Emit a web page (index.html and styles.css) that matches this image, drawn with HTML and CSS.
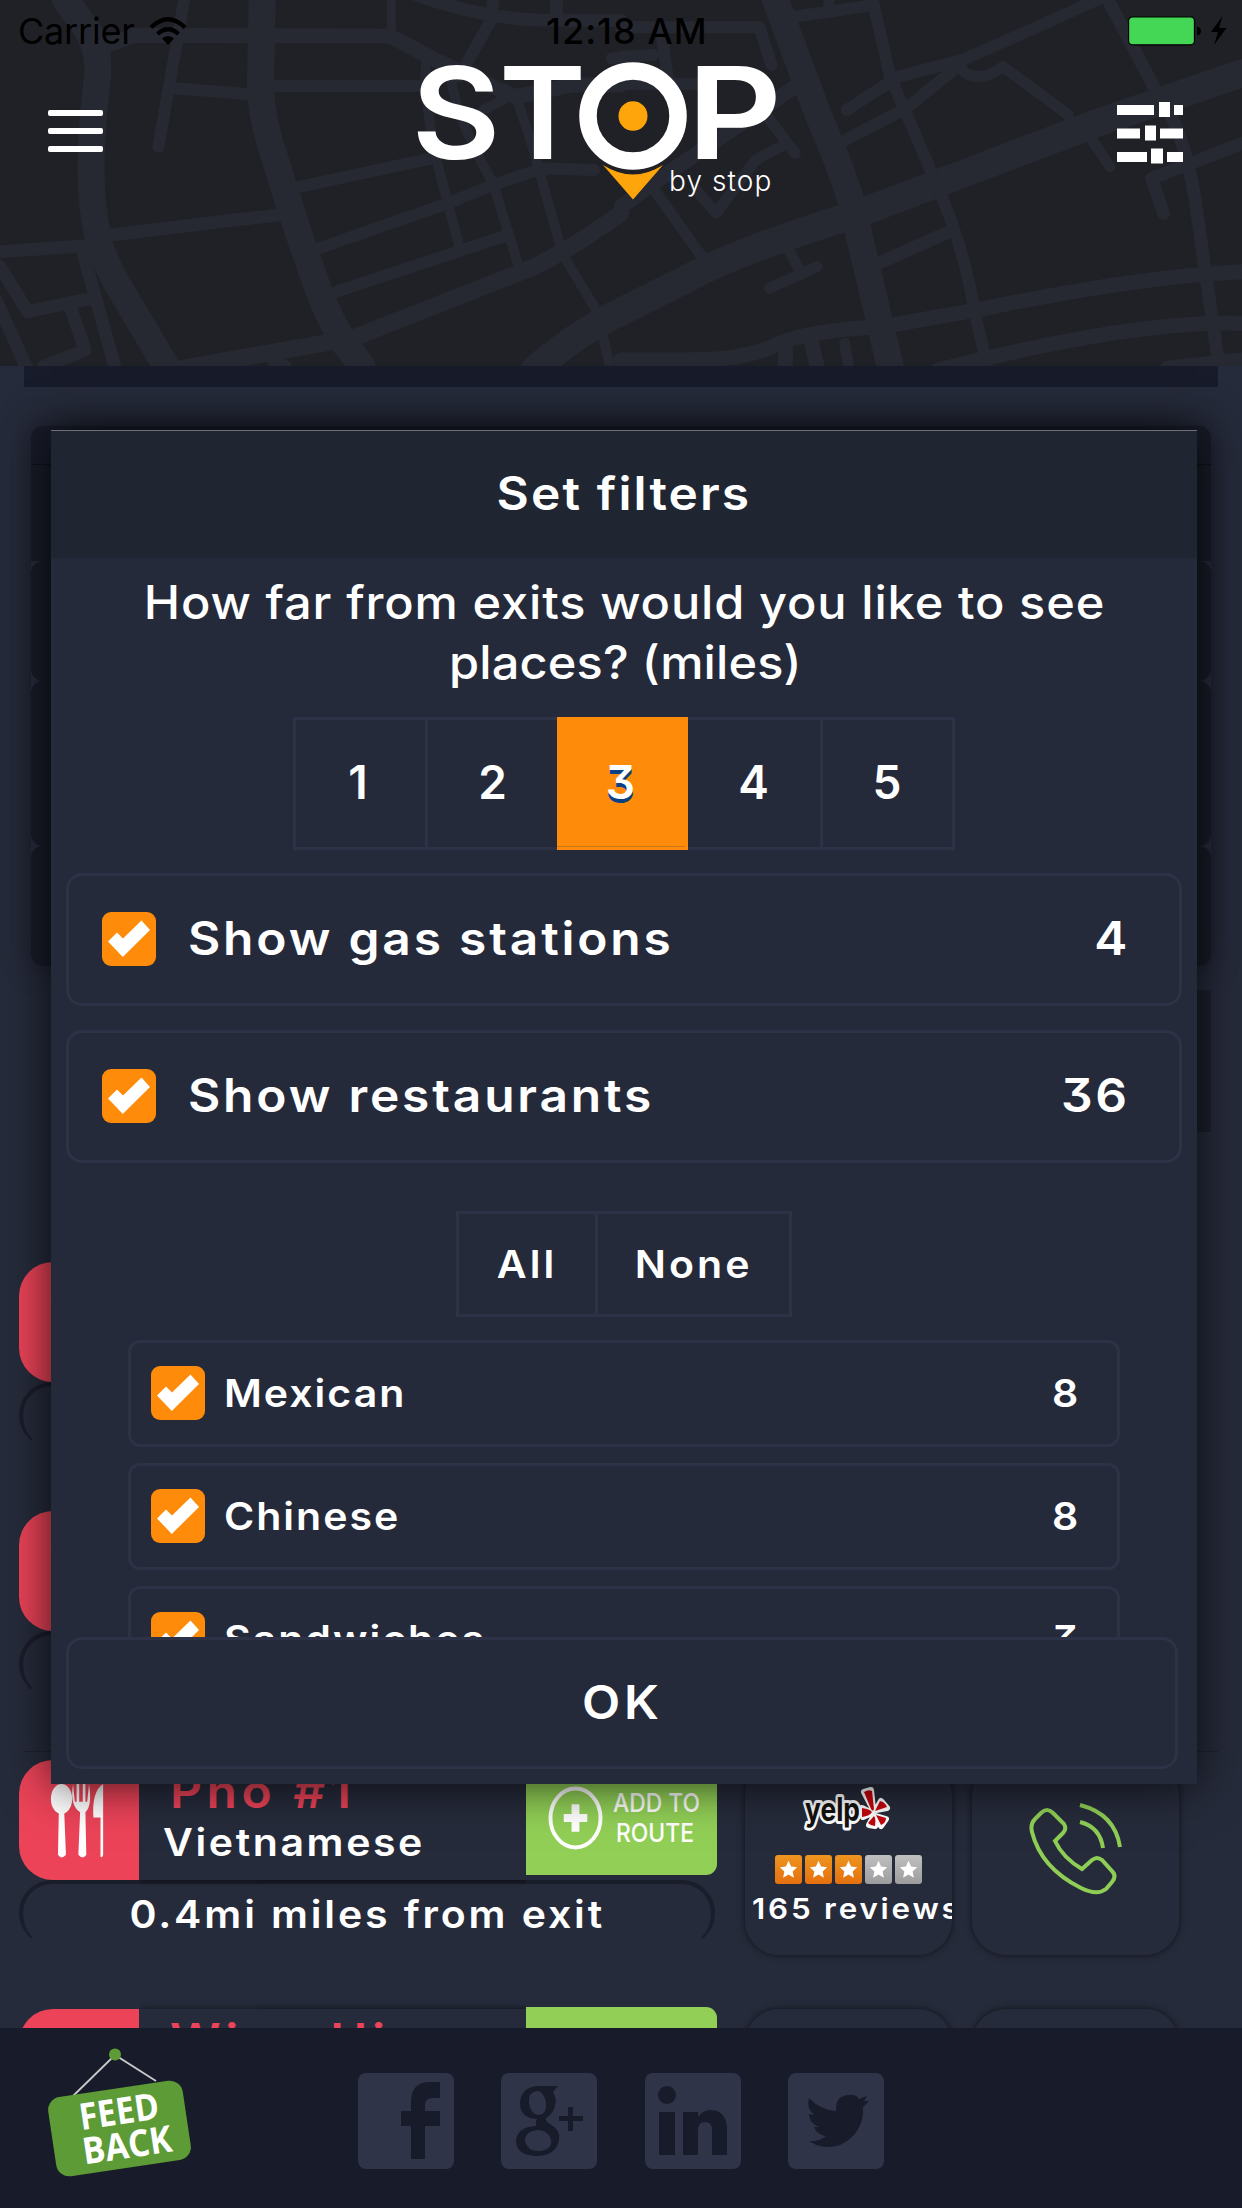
FILE: index.html
```html
<!DOCTYPE html>
<html lang="en">
<head>
<meta charset="utf-8">
<title>Stop by stop</title>
<link rel="stylesheet" href="styles.css">
</head>
<body>
<svg class="defs" aria-hidden="true">
  <symbol id="check" viewBox="0 0 54 54"><path d="M6 29.500 L15 20.500 L21 26.500 L39.500 8.500 L48 18 L20.800 45 Z" fill="#fff"/></symbol>
  <symbol id="utensils" viewBox="0 0 70 90">
    <ellipse cx="13" cy="19" rx="12" ry="17"/><path d="M10 32h6l2 50q-5 6-9 0z"/>
    <path d="M26 2l2 20h2V2h3v20h4V2h3v20h2l2-20q4 24-4 32l1 48q-4 6-9 0l2-48q-12-8-8-32z"/>
    <path d="M57 84V40h-8Q47 10 60 2V82q-1 4-3 2z"/>
  </symbol>
  <symbol id="star" viewBox="0 0 28 28"><path d="M14 5l2.700 6 6.300.700-4.700 4.300 1.300 6.500-5.600-3.300-5.600 3.300 1.300-6.500L5 11.700l6.300-.700z" fill="#fff"/></symbol>
</svg>
<div class="app">
  <header class="top">
    <svg class="map" viewBox="0 0 1242 366" preserveAspectRatio="none">
      <g transform="scale(.396 .3333)">
        <path class="w26" d="M165,0 L215,80 Q250,140 247,220 Q235,350 232,420 C225,560 235,640 250,730 Q270,800 300,860 L420,1100"/>
        <path class="w26" d="M662,0 L658,240 Q655,330 690,460 Q740,650 760,720 C800,860 830,960 870,1030 L915,1100"/>
        <path class="w15" d="M240,150 L340,106 L985,108 L1100,180 L1300,290 L1450,255 H1568"/>
        <path class="w12" d="M465,0 L440,170 L400,440 M440,265 L625,282 M690,258 H1060 M1245,0 L1240,60 L1160,230"/>
        <path class="w9" d="M988,0 V100"/>
        <path class="w14" d="M1040,-20 Q1200,50 1350,60 L1568,62 M1405,0 V60"/>
        <path class="w12" d="M750,562 L1090,475 M805,745 L1130,610 L1245,555 L1370,505 L1500,510 M850,875 L1270,710"/>
        <path class="w10" d="M1078,180 Q1065,250 1100,470 L1160,740 M1140,240 Q1150,350 1245,550 L1310,800 M1220,330 L1300,280 L1340,420 L1420,760 L1510,940 L1540,1100"/>
        <path class="w18" d="M900,1010 L1350,800 Q1450,740 1568,640 M460,1105 L840,1025"/>
        <path class="w14" d="M280,705 L700,645 M0,755 L210,738 M205,740 L290,1100 M0,800 L70,935 L230,895 M-10,900 L70,1110 M180,930 L215,1050 L110,1100 M690,1080 L720,1100"/>
        <path class="w12" d="M1545,175 H1568"/>
      </g>
      <g transform="translate(621 0) scale(.396 .3333)">
        <path class="w28" d="M-220,1110 Q-100,990 0,935 L160,840 Q300,750 600,640 L1200,370 L1568,220"/>
        <path class="w26" d="M390,0 L500,350 Q590,600 600,700 L680,1100"/>
        <path class="w12" d="M440,50 L640,15 M635,0 L680,230 L800,560 Q870,760 890,920 L925,1100 M570,330 L700,230 L860,180 Q1000,110 1220,-10 M550,430 L720,325 L850,200"/>
        <path class="w11" d="M860,200 Q870,240 930,225 L965,200 L1130,345 M1190,420 L1235,500 M350,320 L440,460 M190,570 L240,640 L340,480 L420,430 M90,580 L210,780 M420,740 L450,810 M375,865 L495,800"/>
        <path class="w14" d="M1230,0 L1350,270 Q1420,380 1450,600 L1510,1100 M1568,430 L1440,490 L1340,535 L1370,640 M650,790 L820,700"/>
        <path class="w12" d="M0,82 H350 L380,195 M100,80 L120,250 M0,252 H200 M0,170 L80,165"/>
        <path class="w15" d="M0,620 L130,510 L440,260 M0,1080 C200,1080 300,1090 400,1030 Q480,990 660,980 L900,930 Q1300,830 1568,815 M800,1110 Q1300,960 1568,970 M1380,1105 L1568,1080 M415,1040 V1100 M480,1020 L495,1100"/>
        <path class="w11" d="M565,1030 L575,1100 M525,0 V20"/>
      </g>
    </svg>
    <div class="status">
      <span class="carrier">Carrier</span>
      <svg class="wifi" viewBox="0 0 38 28"><path d="M2 10.500Q19-6 36 10.500" class="arc"/><path d="M8.500 17Q19 7.500 29.500 17" class="arc"/><path d="M13 21.500Q19 16.500 25 21.500L19 28z"/></svg>
      <span class="time">12:18 AM</span>
      <svg class="battery" viewBox="0 0 100 30"><rect x=".5" y=".8" width="66" height="28" rx="4" fill="#44d755" stroke="#000" stroke-width="1.300"/><path d="M69 10.500q4 1 4 4.500t-4 4.500z"/><path d="M94.500 0L83 16h7l-4 13L98.500 12h-7.500z"/></svg>
    </div>
    <div class="nav">
      <div class="burger"><i></i><i></i><i></i></div>
      <svg class="logo" viewBox="410 55 374 150">
        <g class="word">
          <text x="411.500" y="159" textLength="89" lengthAdjust="spacingAndGlyphs">S</text>
          <text x="499" y="159" textLength="87" lengthAdjust="spacingAndGlyphs">T</text>
          <text x="687" y="159" textLength="95" lengthAdjust="spacingAndGlyphs">P</text>
        </g>
        <circle cx="633" cy="116" r="45" fill="none" stroke="#fff" stroke-width="17.500"/>
        <ellipse cx="633" cy="116" rx="14.500" ry="14.800" fill="#ffa50c"/>
        <path d="M603 165Q633 184 663 165L633 199.500Z" fill="#ffa50c"/>
        <text class="tag" x="669" y="190.500">by stop</text>
      </svg>
      <svg class="sliders" viewBox="0 0 66 60"><path d="M0 3h37v10H0zM42 0h11v15H42zM57 3h9v10h-9zM0 26.500h23v10H0zM28 23.500h11v15H28zM43 26.500h23v10H43zM0 50h30v10H0zM34 46.500h12v15H34zM50 50h16v10H50z"/></svg>
    </div>
  </header>

  <main class="feed">
    <div class="strip"></div>
    <div class="panels"><div class="p1"></div><div class="p2"></div><div class="p3"></div><div class="p4"></div></div>
    <div class="side"></div>
    <div class="list">
      <section class="row">
        <div class="place"><div class="head"><div class="tile"><svg class="utensils"><use href="#utensils"/></svg></div></div><div class="clip"><div class="dist"></div></div></div>
      </section>
      <section class="row line">
        <div class="place"><div class="head"><div class="tile"><svg class="utensils"><use href="#utensils"/></svg></div></div><div class="clip"><div class="dist"></div></div></div>
      </section>
      <section class="row">
        <div class="place">
          <div class="head">
            <div class="tile"><svg class="utensils"><use href="#utensils"/></svg></div>
            <div class="info"><h3>Pho #1</h3><p>Vietnamese</p></div>
            <div class="add">
              <svg class="plus" viewBox="0 0 56 64"><ellipse cx="28" cy="32" rx="25.500" ry="30" fill="none" stroke="#fff" stroke-width="4"/><path d="M28 18v28M16 32h24" stroke="#fff" stroke-width="8"/></svg>
              <div class="lbl"><span class="a">ADD TO</span><span class="b">ROUTE</span></div>
            </div>
          </div>
          <div class="clip"><div class="dist"><span class="wide">0.4mi miles from exit</span></div></div>
        </div>
        <div class="card yelp">
          <svg class="ylogo" viewBox="0 0 88 46">
            <g class="halo"><text x="2" y="32" textLength="55" lengthAdjust="spacingAndGlyphs" aria-hidden="true">yelp</text><path d="M61 3l7-2 2 19zM59 19l10 5-9 4zM66 36l5-9 1 10zM73 27l10 3-5 7zM73 21l5-9 6 7z"/></g>
            <path d="M61 3q5-3 8-1l2 18q-1 3-3 0zM59 19q8 1 10 4-2 4-10 5zM65 34l6-7q2 2 1 10-4 0-7-3zM73 26l10 3q0 5-5 7zM72 22l5-10q5 1 7 6z" fill="#c4050c"/>
          </svg>
          <div class="stars"><svg><use href="#star"/></svg><svg><use href="#star"/></svg><svg><use href="#star"/></svg><svg class="off"><use href="#star"/></svg><svg class="off"><use href="#star"/></svg></div>
          <div class="reviews"><span class="wide">165 reviews</span></div>
        </div>
        <div class="card call">
          <svg viewBox="0 0 94 94"><path d="M12 11Q18 5 24 11L35 22Q38 27 34 31L26 39Q34 56 53 67L63 58Q68 54 73 58L83 69Q88 74 83 80L77 87Q68 94 52 86Q12 66 3 30Q1 22 6 17ZM51 3Q86 12 91 45M51 20Q71 25 74 46"/></svg>
        </div>
      </section>
      <section class="row">
        <div class="place">
          <div class="head">
            <div class="tile"></div>
            <div class="info"><h3>Wing Hing</h3></div>
            <div class="add"></div>
          </div>
        </div>
        <div class="card"></div>
        <div class="card"></div>
      </section>
    </div>
  </main>

  <footer class="foot">
    <svg class="sign" viewBox="0 0 150 140">
      <path d="M26 57L69 15L110 41" fill="none" stroke="#c8c8c8" stroke-width="1.800"/>
      <circle cx="69" cy="14.500" r="6" fill="#5d9b36"/>
      <g transform="translate(73.500 88.500) rotate(-8.500)">
        <rect x="-68" y="-40" width="136" height="80" rx="13" fill="#5d9b36"/>
        <text x="-38" y="-4" textLength="80" lengthAdjust="spacingAndGlyphs">FEED</text>
        <text x="-40" y="30.500" textLength="90" lengthAdjust="spacingAndGlyphs">BACK</text>
      </g>
    </svg>
    <nav class="social">
      <svg viewBox="0 0 96 96"><path d="M53 86V53H43V38H53V29Q53 9 72 9H82V25H75Q67 25 67 32V38H82V53H67V86Z"/></svg>
      <svg viewBox="0 0 96 96">
        <path fill-rule="evenodd" d="M57 13L52 19Q56 25 54 33Q52 41 45 45Q44 48 49 51Q60 57 58 67Q55 83 35 83Q15 82 15 68Q16 54 35 53Q34 49 36 46Q19 45 19 30Q20 13 39 13ZM36 18Q27 19 28 30Q30 42 38 42Q46 41 45 30Q43 18 36 18ZM37 57Q24 58 24 68Q26 78 38 78Q51 77 50 68Q49 58 37 57Z"/>
        <path d="M67 34H72V43H82V48H72V58H67V48H58V43H67Z"/>
      </svg>
      <svg viewBox="0 0 96 96"><circle cx="22" cy="22" r="9"/><path d="M14 39H30V82H14ZM38 39H53V44Q58 37 66 37Q82 38 82 56V82H67V57Q67 49 60 49Q53 49 53 58V82H38Z"/></svg>
      <svg viewBox="0 0 96 96"><path d="M21 25Q32 37 48 38Q47 23 60 22Q68 21 71 26L79 23L76 28L81 28L75 34Q76 52 64 64Q53 75 37 74Q28 73 21 68Q31 69 38 63Q29 62 26 54H31Q21 50 21 41L26 42Q18 35 21 25Z"/></svg>
    </nav>
  </footer>

  <div class="modal">
    <h2><span class="wide">Set filters</span></h2>
    <p class="ask"><span class="q1">How far from exits would you like to see</span><br><span class="q2">places? (miles)</span></p>
    <div class="seg miles"><b>1</b><b>2</b><b class="on">3</b><b>4</b><b>5</b></div>
    <label class="opt"><i class="box"><svg><use href="#check"/></svg></i><span class="wide">Show gas stations</span><em class="wide">4</em></label>
    <label class="opt"><i class="box"><svg><use href="#check"/></svg></i><span class="wide">Show restaurants</span><em class="wide">36</em></label>
    <div class="scroll">
      <div class="seg pick"><b><span class="wide">All</span></b><b><span class="wide">None</span></b></div>
      <label class="kind"><i class="box"><svg><use href="#check"/></svg></i><span class="wide">Mexican</span><em class="wide">8</em></label>
      <label class="kind"><i class="box"><svg><use href="#check"/></svg></i><span class="wide">Chinese</span><em class="wide">8</em></label>
      <label class="kind"><i class="box"><svg><use href="#check"/></svg></i><span class="wide">Sandwiches</span><em class="wide">3</em></label>
    </div>
    <button class="ok"><span class="wide">OK</span></button>
  </div>
</div>
</body>
</html>
```
FILE: styles.css
```css
* { box-sizing: border-box; }
body { margin: 0; font-family: Inter, "Liberation Sans", sans-serif; color: #fff; background: #262b3b; }
h2, h3, p { margin: 0; }
i, em { font-style: normal; }
svg { display: block; }
.defs { position: absolute; width: 0; height: 0; }
.app { position: relative; width: 1242px; height: 2208px; display: grid; grid-template-rows: 366px 1662px 180px; overflow: hidden; }
/* widened lettering */
.wide { display: inline-block; transform: scaleX(1.08); }

/* header */
.top { position: relative; background: #202126; }
.map { position: absolute; inset: 0; width: 100%; height: 100%; fill: none; stroke: #272932; stroke-linecap: round; stroke-linejoin: round; }
.map path { vector-effect: non-scaling-stroke; }
.w9 { stroke-width: 9px; }
.w10 { stroke-width: 10px; }
.w11 { stroke-width: 11px; }
.w12 { stroke-width: 12px; }
.w14 { stroke-width: 13px; }
.w15 { stroke-width: 15px; }
.w18 { stroke-width: 17px; }
.w26 { stroke-width: 27px; }
.w28 { stroke-width: 28px; }
.status { position: relative; display: flex; height: 62px; padding: 0 14px 0 18px; align-items: center; color: #000; font-size: 36px; }
.carrier { width: 131px; letter-spacing: -.2px; }
.wifi { width: 38px; height: 28px; }
.wifi .arc { fill: none; stroke: #000; stroke-width: 4.200px; }
.time { width: 583px; padding-left: 359px; font-weight: 500; letter-spacing: 1px; white-space: nowrap; }
.battery { width: 100px; height: 30px; margin-left: 358px; }
.nav { position: relative; display: grid; grid-template-columns: 410px 374px 1fr; height: 150px; margin-top: -7px; }
.burger { display: grid; gap: 12.500px; align-content: start; padding: 55px 0 0 48px; }
.burger i { width: 55px; height: 5.500px; border-radius: 2px; background: #fff; }
.logo { width: 374px; height: 150px; overflow: visible; }
.word text { font-size: 128px; font-weight: 600; fill: #fff; }
.tag { font-size: 28px; font-weight: 300; letter-spacing: 1.100px; fill: #fff; }
.sliders { width: 66px; height: 62px; margin: 46px 0 0 333px; fill: #fff; overflow: visible; }

/* results behind the dialog */
.feed { overflow: hidden; }
.strip { height: 21px; margin: 0 24px 39px; background: #181b29; }
.panels { margin: 0 31px; border-radius: 12px; box-shadow: 0 0 30px rgba(0,0,0,.35); }
.panels div { border-radius: 12px; background: #181b28; }
.p1 { height: 135px; }
.panels .p1 { border-radius: 12px 12px 0 0; background: linear-gradient(#10121a, #10121a) 0 38px / 100% 1px no-repeat #181b28; }
.p2 { height: 120px; }
.p3 { height: 165px; }
.p4 { height: 120px; }
.side { width: 600px; height: 142px; margin: 24px 31px 130px auto; background: #1d202d; }
.row { display: grid; grid-template-columns: 726px 227px 207px; height: 249px; padding-left: 19px; }
.line { background: linear-gradient(#1e212d, #1e212d) 24px 240px / 1194px 1px no-repeat; }
.head { display: flex; height: 120px; }
.tile { width: 120px; height: 120px; border-radius: 34px 0 0 34px; background: #ec4358; }
.utensils { width: 62px; height: 92px; margin: 16px 0 0 31px; fill: #fff; }
.info { width: 387px; height: 120px; box-shadow: 120px 0 4px rgba(0,0,0,.25), 0 0 7px rgba(0,0,0,.5); background: #262b3b; clip-path: inset(-8px 0 -8px 0); }
.info h3 { padding-left: 31px; margin-top: 1px; font-size: 46px; font-weight: 600; line-height: 60px; letter-spacing: 4.200px; color: #ec4358; white-space: nowrap; transform: scaleX(1.08); transform-origin: 31px 0; }
.info p { padding-left: 24px; font-size: 38px; font-weight: 600; line-height: 42px; letter-spacing: 2.400px; transform: scaleX(1.08); transform-origin: 24px 0; }
.add { display: flex; width: 191px; height: 117px; margin-top: -2px; border-radius: 0 11px 11px 0; background: #91cf56; padding: 28px 0 0 22px; }
.plus { width: 55px; height: 64px; }
.lbl { display: grid; grid-template-rows: 30px 30px; padding: 2px 0 0 10px; font-size: 26px; line-height: 30px; font-weight: 500; }
.a, .b { transform: scaleX(.88); transform-origin: 0 0; letter-spacing: 0; white-space: nowrap; }
.b { margin-left: 3px; }
.clip { width: 698px; height: 58px; overflow: hidden; }
.dist { width: 696px; height: 66px; border: 4px solid #1a1d2a; border-bottom: 0; border-radius: 36px; font-size: 38px; font-weight: 600; letter-spacing: 2.650px; line-height: 60px; text-align: center; white-space: nowrap; }
.card { width: 207px; height: 195px; border-radius: 34px; background: #262b3b; box-shadow: 0 0 7px rgba(0,0,0,.6); overflow: hidden; }
.ylogo { width: 88px; height: 46px; margin: 29px 0 0 58px; overflow: visible; }
.ylogo text { font-size: 33px; font-weight: 700; fill: #14120f; paint-order: stroke; }
.ylogo .halo { stroke: #fff; stroke-width: 6px; stroke-linejoin: round; }
.ylogo .halo path { fill: #fff; }
.stars { display: flex; gap: 3px; margin: 20px 0 0 30px; }
.stars svg { width: 27px; height: 29px; border-radius: 3px; background: linear-gradient(#ee951f, #e4700f); }
.stars .off { background: linear-gradient(#c0c0c0, #9c9c9c); }
.reviews { padding-left: 7px; font-size: 29px; font-weight: 600; letter-spacing: 2.600px; line-height: 49px; white-space: nowrap; }
.reviews .wide { transform-origin: 0 0; }
.call svg { width: 94px; height: 94px; margin: 42px 0 0 57px; fill: none; stroke: #8fce55; stroke-width: 4px; }

/* footer */
.foot { display: flex; background: #181b29; }
.sign { width: 150px; height: 140px; margin: 12px 0 0 46px; }
.sign text { font-family: "Open Sans", sans-serif; font-size: 37px; font-weight: 700; fill: #fff; }
.social { display: flex; gap: 47.300px; padding: 45px 0 0 162px; }
.social svg { width: 96px; height: 96px; border-radius: 8px; background: #2f3448; fill: #181b29; }

/* filter dialog */
.modal { position: absolute; left: 51px; top: 430px; width: 1146px; height: 1354px; background: #252a3a; border-top: 1px solid #6d7178; box-shadow: 0 0 45px rgba(0,0,0,.75); font-feature-settings: "cv09"; }
.modal h2 { height: 127px; background: #202532; font-size: 46px; font-weight: 600; letter-spacing: 1.950px; line-height: 125px; text-align: center; }
.ask { padding-top: 14px; height: 159px; font-size: 46px; font-weight: 500; line-height: 60px; text-align: center; white-space: nowrap; }
.ask span { display: inline-block; transform: scaleX(1.06); }
.q1 { letter-spacing: .800px; }
.q2 { letter-spacing: .100px; padding-left: 3px; }
.seg { display: flex; justify-content: center; }
.seg b { border: 3px solid #2d3247; text-align: center; font-weight: 600; }
.seg b + b { border-left: 0; }
.miles { width: 662px; height: 133px; margin: 0 auto 23px 242px; }
.miles b { width: 132px; font-size: 46px; line-height: 124px; padding-right: 1px; }
.miles b:first-child { width: 135px; padding-right: 5px; }
.miles b:nth-child(2) { width: 129px; border-right: 0; padding: 0; }
.miles .on { width: 131px; background: linear-gradient(#c9791c, #c9791c) 0 126px / 100% 1px no-repeat #fe8b0a; border-color: #fe8b0a; text-shadow: 0 4px 0 #0a4185; }
.miles b:nth-child(4) { width: 135px; }
.opt { display: flex; align-items: center; width: 1116px; height: 133px; margin: 0 0 24px 15px; padding: 0 49px 0 33px; border: 3px solid #2d3247; border-radius: 16px; font-size: 46px; font-weight: 600; letter-spacing: 2.600px; line-height: 60px; }
.box { width: 54px; height: 54px; border-radius: 9px; background: #fe8b0a; flex: none; }
.box svg { width: 54px; height: 54px; }
.opt .box { margin-top: -2px; }
.opt span, .kind span { transform-origin: 0 0; }
.opt em, .kind em { transform-origin: 100% 0; }
.opt span { margin: -3px 0 0 32px; }
.opt em { margin: -3px 0 0 auto; }
.scroll { height: 450px; padding-top: 24px; overflow: hidden; }
.pick { height: 106px; margin-bottom: 23px; }
.pick b { font-size: 38px; line-height: 100px; letter-spacing: 2.900px; width: 142px; }
.pick b + b { width: 194px; }
.kind { display: flex; align-items: center; width: 992px; height: 106.500px; margin: 0 0 16.500px 77px; padding: 0 37px 0 20px; border: 3px solid #2d3247; border-radius: 12px; font-size: 38px; font-weight: 600; letter-spacing: 1.850px; }
.kind span { margin-left: 19px; }
.kind em { margin-left: auto; }
.ok { display: block; width: 1112px; height: 132px; margin: 0 0 0 15px; padding: 0; border: 3px solid #2d3247; border-radius: 16px; background: #252a3a; color: #fff; font: 600 46px/124px Inter, sans-serif; letter-spacing: 3.500px; text-align: center; padding-bottom: 2px; }
```
